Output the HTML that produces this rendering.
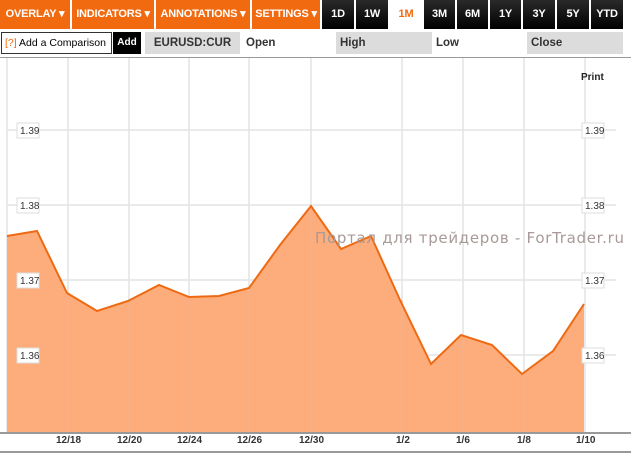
<!DOCTYPE html>
<html><head><meta charset="utf-8"><style>
body{margin:0;width:631px;height:454px;background:#fff;font-family:"Liberation Sans",Arial,sans-serif;position:relative;overflow:hidden}
.t{position:absolute;top:0;height:29px;line-height:29px;font-size:11px;font-weight:bold;color:#fff;text-align:center;white-space:nowrap;letter-spacing:-0.2px}
.o{background:#f26a10}
.k{background:linear-gradient(#2a2a2a,#000)}
.r{position:absolute;top:32px;height:22px;line-height:22px;font-size:11.5px;white-space:nowrap}
.g{background:#dcdcdc;font-weight:bold;color:#333}
.ax{position:absolute;font-size:10px;font-weight:bold;color:#333;top:435px}
</style></head><body>
<div class="t o" style="left:0;width:70px">OVERLAY ▾</div>
<div class="t o" style="left:72px;width:82px">INDICATORS ▾</div>
<div class="t o" style="left:156px;width:94px">ANNOTATIONS ▾</div>
<div class="t o" style="left:252px;width:68px">SETTINGS ▾</div>
<div class="t k" style="left:322px;width:32px">1D</div>
<div class="t k" style="left:356px;width:32px">1W</div>
<div class="t" style="left:390px;width:32px;color:#f26a10;background:#fff">1M</div>
<div class="t k" style="left:424px;width:31px">3M</div>
<div class="t k" style="left:457px;width:31px">6M</div>
<div class="t k" style="left:490px;width:31px">1Y</div>
<div class="t k" style="left:523px;width:32px">3Y</div>
<div class="t k" style="left:557px;width:32px">5Y</div>
<div class="t k" style="left:591px;width:32px">YTD</div>
<div class="r" style="left:1px;width:111px;border:1px solid #333;line-height:20px;font-size:10.5px;padding-left:3px;box-sizing:border-box;overflow:hidden"><span style="color:#f26a10">[?]</span> Add a Comparison</div>
<div class="r" style="left:113px;width:28px;background:#000;color:#fff;font-weight:bold;font-size:10px;text-align:center">Add</div>
<div class="r g" style="left:145px;width:95px;text-align:center">EURUSD:CUR</div>
<div class="r" style="left:246px;font-weight:bold;color:#333">Open</div>
<div class="r g" style="left:336px;width:96px;padding-left:4px;box-sizing:border-box">High</div>
<div class="r" style="left:436px;font-weight:bold;color:#333">Low</div>
<div class="r g" style="left:527px;width:96px;padding-left:4px;box-sizing:border-box">Close</div>
<div style="position:absolute;left:0;top:57px;width:631px;height:1px;background:#999"></div>
<svg style="position:absolute;left:0;top:0" width="631" height="454">
<g stroke="#e4e4e4" stroke-width="1.5">
<line x1="7" y1="58" x2="7" y2="432"/><line x1="68" y1="58" x2="68" y2="432"/><line x1="129" y1="58" x2="129" y2="432"/><line x1="189" y1="58" x2="189" y2="432"/><line x1="249" y1="58" x2="249" y2="432"/><line x1="311" y1="58" x2="311" y2="432"/><line x1="402" y1="58" x2="402" y2="432"/><line x1="463" y1="58" x2="463" y2="432"/><line x1="524" y1="58" x2="524" y2="432"/><line x1="585" y1="58" x2="585" y2="432"/>
<line x1="7" y1="130" x2="616" y2="130"/><line x1="7" y1="205" x2="616" y2="205"/><line x1="7" y1="280" x2="616" y2="280"/><line x1="7" y1="355" x2="616" y2="355"/>
</g>
<polygon fill="#fdad7b" points="7,236 37,231 67,293 97,311 128,301 159,285 189,297 219,296 249,288 280,245 311,206 341,249 371,236 400,300 431,364 461,335 492,345 522,374 553,351 584,304 584,432 7,432"/>
<g stroke="#f4b090" stroke-width="1"><line x1="68" y1="300" x2="68" y2="432"/><line x1="129" y1="300" x2="129" y2="432"/><line x1="189" y1="297" x2="189" y2="432"/><line x1="249" y1="290" x2="249" y2="432"/><line x1="311" y1="210" x2="311" y2="432"/><line x1="402" y1="300" x2="402" y2="432"/><line x1="463" y1="340" x2="463" y2="432"/><line x1="524" y1="372" x2="524" y2="432"/></g>
<polyline fill="none" stroke="#ee6a12" stroke-width="2" points="7,236 37,231 67,293 97,311 128,301 159,285 189,297 219,296 249,288 280,245 311,206 341,249 371,236 400,300 431,364 461,335 492,345 522,374 553,351 584,304"/>
<g font-size="10" fill="#333" font-family="Liberation Sans,sans-serif">
<rect x="17" y="123" width="22" height="15" fill="#fff" stroke="#ddd"/><text x="20" y="134">1.39</text>
<rect x="17" y="198" width="22" height="15" fill="#fff" stroke="#ddd"/><text x="20" y="209">1.38</text>
<rect x="17" y="273" width="22" height="15" fill="#fff" stroke="#ddd"/><text x="20" y="284">1.37</text>
<rect x="17" y="348" width="22" height="15" fill="#fff" stroke="#ddd"/><text x="20" y="359">1.36</text>
<rect x="582" y="123" width="22" height="15" fill="#fff" stroke="#ddd"/><text x="585" y="134">1.39</text>
<rect x="582" y="198" width="22" height="15" fill="#fff" stroke="#ddd"/><text x="585" y="209">1.38</text>
<rect x="582" y="273" width="22" height="15" fill="#fff" stroke="#ddd"/><text x="585" y="284">1.37</text>
<rect x="582" y="348" width="22" height="15" fill="#fff" stroke="#ddd"/><text x="585" y="359">1.36</text>
</g>
<text x="581" y="80" font-size="10" font-weight="bold" fill="#222" font-family="Liberation Sans,sans-serif">Print</text>
<text x="315" y="243" font-size="15" fill="#a89a98" font-family="DejaVu Sans,sans-serif" textLength="309">Портал для трейдеров - ForTrader.ru</text>
<line x1="0" y1="433" x2="631" y2="433" stroke="#333" stroke-width="1"/>
<line x1="0" y1="452" x2="631" y2="452" stroke="#333" stroke-width="1"/>
</svg>
<div class="ax" style="left:56px">12/18</div>
<div class="ax" style="left:117px">12/20</div>
<div class="ax" style="left:177px">12/24</div>
<div class="ax" style="left:237px">12/26</div>
<div class="ax" style="left:299px">12/30</div>
<div class="ax" style="left:396px">1/2</div>
<div class="ax" style="left:456px">1/6</div>
<div class="ax" style="left:517px">1/8</div>
<div class="ax" style="left:576px">1/10</div>
</body></html>
